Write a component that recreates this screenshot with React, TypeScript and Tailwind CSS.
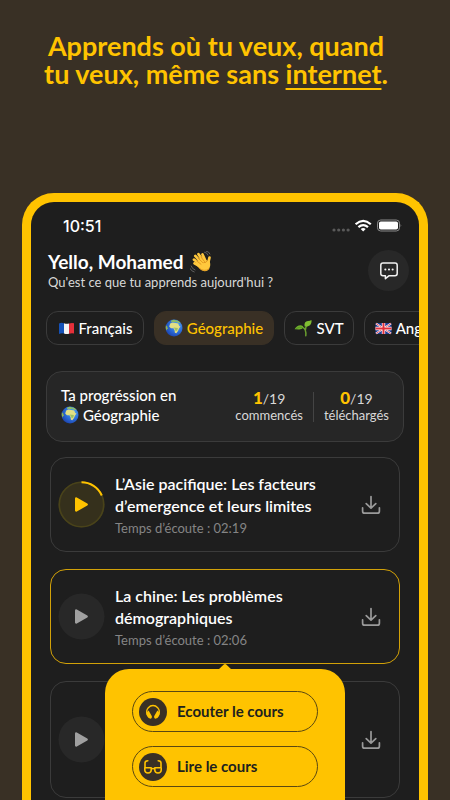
import type { ReactNode } from "react";

function FranceFlag() {
  return (
    <svg width="17" height="13" viewBox="0 0 17 13" aria-hidden="true" className="shrink-0">
      <path d="M1 1.500Q3.500 .3 6 1.300V11.500Q3.500 10.600 1 12Z" fill="#1652b8" />
      <path d="M6 1.300Q8.500 2.200 11 1.500V11.800Q8.500 12.500 6 11.500Z" fill="#f4f4f4" />
      <path d="M11 1.500Q13.500 .6 16 1.200V11.500Q13.500 10.900 11 11.800Z" fill="#e6303a" />
    </svg>
  );
}

function UkFlag() {
  return (
    <svg width="17" height="13" viewBox="0 0 17 13" aria-hidden="true" className="shrink-0">
      <rect x=".5" y="1" width="16" height="11" rx="1" fill="#1d3b94" />
      <path d="M1 1.500 16 11.500M16 1.500 1 11.500" stroke="#fff" strokeWidth="2" />
      <path d="M1 1.500 16 11.500M16 1.500 1 11.500" stroke="#e0303c" strokeWidth=".8" />
      <path d="M8.500 1V12M.5 6.500H16.500" stroke="#fff" strokeWidth="3.400" />
      <path d="M8.500 1V12M.5 6.500H16.500" stroke="#e0303c" strokeWidth="2" />
    </svg>
  );
}

function Globe() {
  return (
    <svg width="18" height="18" viewBox="0 0 18 18" aria-hidden="true" className="shrink-0">
      <defs>
        <radialGradient id="sea" cx=".65" cy=".35" r=".75">
          <stop offset="0" stopColor="#5fb4f2" />
          <stop offset=".5" stopColor="#2d70dc" />
          <stop offset="1" stopColor="#1a3faa" />
        </radialGradient>
      </defs>
      <circle cx="9" cy="9" r="8.500" fill="url(#sea)" />
      <path d="M5.200 4.500 7.500 3.600 10.500 3.900 13.200 4.600 14.200 7 15.500 7.600 14 9.600 13 12 11.300 14.300 9.900 13.800 9.500 11 8.500 9.200 5.900 9.300 4.200 7.600Z" fill="#e2df85" />
      <path d="M6.500 1.200 9 .8 13.500 2 15.600 4 13 3.800 11 2.800 9.300 3.300 7.500 2.800 5.800 3.500Z" fill="#8fbd63" />
      <path d="M8.500 8.500 12.900 8.900 12.300 11.500 10.600 12.200 9.900 10Z" fill="#9fc163" />
      <path d="M.9 6.300 2.200 7.500 2.700 9.300 1.500 11.500Q.2 9 .9 6.300Z" fill="#90b354" />
    </svg>
  );
}

function Seedling() {
  return (
    <svg width="18" height="18" viewBox="0 0 18 18" aria-hidden="true" className="shrink-0">
      <path d="M11.800 16.800Q12.400 10 8.700 8.400M11.500 10.500Q11.300 7.500 14.500 4.700" fill="none" stroke="#6a9e2f" strokeWidth="1.500" strokeLinecap="round" />
      <path d="M.6 10.200Q3 5.900 7 6.200 9.300 6.700 9.500 8.600 7.500 10.800 4.500 10.500 2.500 10 .6 10.200Z" fill="#6faf2c" />
      <path d="M10.600 7.500Q9.800 2.200 14 1.900 16 1.800 17.500 .9 18 5.500 14.500 7Q12.500 7.900 10.600 7.500Z" fill="#80bd32" />
      <path d="M2 9.700Q5.500 7.500 8.500 8.500" fill="none" stroke="#4f8a22" strokeWidth=".6" />
    </svg>
  );
}

function Wave() {
  return (
    <svg width="22" height="22" viewBox="0 0 22 22" aria-hidden="true" className="shrink-0">
      <g fill="none" stroke="#ffc83d" strokeLinecap="round" strokeWidth="2.700">
        <path d="M10.500 13.500 4 8.600M11.500 11.500 5.300 4.900M13.500 10.500 8.500 3.200M15.500 10 12.500 3.500" />
        <path d="M18 13 19.500 6.500" />
        <path d="M10.500 15.500 4.500 12.300" />
      </g>
      <path d="M8 10.500 14.800 8.700 19.800 10.500Q21.300 15.500 18.200 19 14.500 21.600 10.800 18.800L6.500 14.500Z" fill="#ffc83d" />
      <path d="M6.500 9.800 11 13.300M8.200 7.200 12.700 11.500M11 6 14.500 10.500M13.700 11.800Q16.500 12 17.500 9.500M9 17Q14 21.500 19 18" fill="none" stroke="#d98c18" strokeWidth=".8" strokeLinecap="round" />
      <path d="M14.500 1.200Q17.500 1.800 18 4M16 0Q19.200 .6 20 3M1.200 15Q2 18 5 19M0 17.500Q1.500 20.500 4.200 21" fill="none" stroke="#686868" strokeWidth=".9" strokeLinecap="round" />
    </svg>
  );
}

function StatusIcons() {
  return (
    <svg width="70" height="14" viewBox="0 0 70 14" role="img" aria-label="Wi-Fi et batterie">
      <g fill="#5a5a5a">
        <circle cx="2" cy="11" r="1.600" />
        <circle cx="6.700" cy="11" r="1.600" />
        <circle cx="11.400" cy="11" r="1.600" />
        <circle cx="16.100" cy="11" r="1.600" />
      </g>
      <g fill="none" stroke="#fff" strokeWidth="2.200">
        <path d="M23.600 5.300Q31.200-1.500 38.800 5.300" />
        <path d="M26.400 8.200Q31.200 4 36 8.200" />
      </g>
      <path d="M28.700 9.900Q31.200 8 33.700 9.900L31.200 12.600Z" fill="#fff" />
      <rect x="45.500" y="1" width="22" height="11" rx="3.200" fill="none" stroke="#8a8a8a" />
      <rect x="47" y="2.500" width="19" height="8" rx="1.800" fill="#fff" />
      <path d="M68.600 4.700Q70 6.500 68.600 8.300Z" fill="#8a8a8a" />
    </svg>
  );
}

function ChatIcon() {
  return (
    <svg width="20" height="20" viewBox="0 0 20 20" fill="none" stroke="#f2f2f2" strokeWidth="1.500" strokeLinejoin="round" aria-hidden="true">
      <path d="M4 2H16Q18.200 2 18.200 4.200V12.500Q18.200 14.700 16 14.700H10.200L6.400 17.700V14.700H4Q1.800 14.700 1.800 12.500V4.200Q1.800 2 4 2Z" />
      <path d="M6.300 8.600H6.400M9.950 8.600H10.050M13.600 8.600H13.700" strokeWidth="2" strokeLinecap="round" />
    </svg>
  );
}

function DownloadIcon() {
  return (
    <svg width="20" height="20" viewBox="0 0 20 20" fill="none" stroke="#9a9a9a" strokeWidth="1.700" strokeLinecap="round" strokeLinejoin="round" aria-hidden="true">
      <path d="M10 1.500V13M5.200 8.600 10 13.200 14.800 8.600M1.600 12.800V16.200Q1.600 18.200 3.600 18.200H16.400Q18.400 18.200 18.400 16.200V12.800" />
    </svg>
  );
}

function HeadphonesIcon() {
  return (
    <svg width="18" height="18" viewBox="0 0 18 18" aria-hidden="true">
      <path d="M3.200 12Q1.700 7.500 4.300 4.700 6.300 2.500 9 2.500T13.700 4.700Q16.300 7.500 14.800 12" fill="none" stroke="#ffc300" strokeWidth="1.300" />
      <path d="M4.600 7.600 7.900 13.200Q8.100 15.300 6.700 15.800 4.300 15.500 3 13.100 1.900 9.500 4.600 7.600ZM13.400 7.600 10.100 13.200Q9.900 15.300 11.300 15.800 13.700 15.500 15 13.100 16.100 9.500 13.400 7.600Z" fill="#ffc300" />
    </svg>
  );
}

function GlassesIcon() {
  return (
    <svg width="20" height="18" viewBox="0 0 20 18" fill="none" stroke="#ffc300" strokeWidth="1.600" strokeLinecap="round" strokeLinejoin="round" aria-hidden="true">
      <path d="M2 10V5Q2 2.700 4.800 2.700M18 10V5Q18 2.700 15.200 2.700M1.800 9.800H8.200V12.300Q8 15 5 15T1.800 12.300ZM11.800 9.800H18.200V12.300Q18 15 15 15T11.800 12.300ZM8.200 11Q10 10 11.800 11" />
    </svg>
  );
}

function PlayButton({ active, label }: { active?: boolean; label: string }) {
  return (
    <button type="button" aria-label={label} className="size-[47px] shrink-0">
      <svg width="47" height="47" viewBox="0 0 47 47" aria-hidden="true">
        <circle cx="23.500" cy="23.500" r="23" fill={active ? "#35301c" : "#282828"} />
        {active && (
          <>
            <circle cx="23.500" cy="23.500" r="22.200" fill="none" stroke="#49431a" strokeWidth="1.600" />
            <path d="M23.500 1.300A22.200 22.200 0 0 1 43.800 14.500" fill="none" stroke="#ffc300" strokeWidth="2" />
          </>
        )}
        <path d="M18.200 17.500 28.700 23.500 18.200 29.500Z" fill={active ? "#ffc300" : "#a0a0a0"} stroke={active ? "#ffc300" : "#a0a0a0"} strokeWidth="2.400" strokeLinejoin="round" />
      </svg>
    </button>
  );
}

function Chip({ icon, label, width, active }: { icon: ReactNode; label: string; width: string; active?: boolean }) {
  return (
    <button
      type="button"
      aria-pressed={!!active}
      className={`flex h-[34px] shrink-0 items-center justify-center gap-1 whitespace-nowrap rounded-xl border text-[15px] font-medium ${width} ${
        active ? "border-[#393025] bg-[#393025] text-[#ffc300]" : "border-[#3b3b3b] text-white"
      }`}
    >
      {icon}
      {label}
    </button>
  );
}

function Stat({ value, label }: { value: string; label: string }) {
  return (
    <div className="text-center text-[13px] leading-4 text-[#d8d8d8]">
      <p className="text-[14px]">
        <span className="text-[17px] font-black text-[#ffc300]">{value}</span>/19
      </p>
      <p>{label}</p>
    </div>
  );
}

interface LessonProps {
  title?: [string, string];
  time?: string;
  playing?: boolean;
  selected?: boolean;
  children?: ReactNode;
}

function Lesson({ title, time, playing, selected, children }: LessonProps) {
  return (
    <li
      className={`relative flex items-center rounded-2xl border pl-[7px] pr-[18px] ${
        title ? "h-[95px]" : "h-[117px]"
      } ${selected ? "border-[#d2a108]" : "border-[#3b3b3b]"}`}
    >
      <PlayButton active={playing} label="Lire" />
      <div className="min-w-0 flex-1 pl-[10px] pt-[3px]">
        {title && (
          <h2 className="whitespace-nowrap text-[16px] font-semibold leading-[22px] text-white">
            {title[0]}
            <br />
            {title[1]}
          </h2>
        )}
        {time && <p className="text-[13px] leading-[22px] text-[#858585]">Temps d’écoute : {time}</p>}
      </div>
      <button type="button" aria-label="Télécharger" className="shrink-0">
        <DownloadIcon />
      </button>
      {children}
    </li>
  );
}

function MenuButton({ icon, label }: { icon: ReactNode; label: string }) {
  return (
    <button type="button" className="flex h-[41px] items-center gap-[10px] rounded-full border border-[#5a4812] pl-[6px] text-[15px] font-bold text-[#211f1e]">
      <span className="flex size-7 items-center justify-center rounded-full bg-[#393025]">{icon}</span>
      {label}
    </button>
  );
}

export default function App() {
  return (
    <main className="flex h-screen flex-col overflow-hidden bg-[#393025] font-['Lato','Open_Sans',sans-serif]">
      <h1 className="pr-[18px] pt-8 text-center text-[27px] font-bold leading-7 text-[#ffc300]">
        Apprends où tu veux, quand
        <br />
        tu veux, même sans <span className="underline decoration-2 underline-offset-4">internet</span>.
      </h1>

      <div className="mx-[22px] mt-[105px] min-h-0 flex-1 overflow-hidden rounded-t-[32px] border-x-[9px] border-t-[9px] border-[#ffc300] bg-[#1e1e1e] text-white">
        <div className="flex h-12 items-center justify-between pl-8 pr-[17px]">
          <span className="font-['Inter',sans-serif] text-[16px] font-medium">10:51</span>
          <StatusIcons />
        </div>

        <header className="flex items-center justify-between pl-[17px] pr-[10px]">
          <div>
            <p className="flex items-center gap-[6px] text-[19px] font-bold leading-[22px]">
              Yello, Mohamed <Wave />
            </p>
            <p className="text-[13px] leading-[18px] text-[#d8d8d8]">Qu'est ce que tu apprends aujourd'hui ?</p>
          </div>
          <button type="button" aria-label="Messages" className="flex size-[41px] items-center justify-center rounded-full bg-[#282828]">
            <ChatIcon />
          </button>
        </header>

        <nav aria-label="Matières" className="mt-5 flex gap-[10px] overflow-hidden pl-[15px]">
          <Chip icon={<FranceFlag />} label="Français" width="w-[98px]" />
          <Chip icon={<Globe />} label="Géographie" width="w-[120px]" active />
          <Chip icon={<Seedling />} label="SVT" width="w-[70px]" />
          <Chip icon={<UkFlag />} label="Anglais" width="w-[90px]" />
        </nav>

        <section className="mx-[15px] mt-[26px] flex h-[71px] items-center rounded-2xl border border-[#3b3b3b] bg-[#262626] pl-[14px] pr-[14px]">
          <div className="flex-1 pb-1 text-[15px] font-medium leading-5">
            <p>Ta progréssion en</p>
            <p className="flex items-center gap-1">
              <Globe /> Géographie
            </p>
          </div>
          <Stat value="1" label="commencés" />
          <div className="mx-[10px] h-[30px] w-px bg-[#444]" />
          <Stat value="0" label="téléchargés" />
        </section>

        <ul className="mx-[19px] mt-[15px] flex flex-col gap-[17px]">
          <Lesson title={["L’Asie pacifique: Les facteurs", "d’emergence et leurs limites"]} time="02:19" playing />
          <Lesson title={["La chine: Les problèmes", "démographiques"]} time="02:06" selected>
            <div className="absolute left-1/2 top-full z-10 mt-[6px] w-60 -translate-x-1/2 rounded-t-3xl bg-[#ffc300] px-[27px] pb-8 pt-[22px]">
              <svg width="14" height="6" viewBox="0 0 14 6" className="absolute -top-[5px] left-1/2 -translate-x-1/2" aria-hidden="true">
                <path d="M0 6 5.500 .8Q7-.6 8.500 .8L14 6Z" fill="#ffc300" />
              </svg>
              <div className="flex flex-col gap-[14px]">
                <MenuButton icon={<HeadphonesIcon />} label="Ecouter le cours" />
                <MenuButton icon={<GlassesIcon />} label="Lire le cours" />
              </div>
            </div>
          </Lesson>
          <Lesson />
        </ul>
      </div>
    </main>
  );
}
